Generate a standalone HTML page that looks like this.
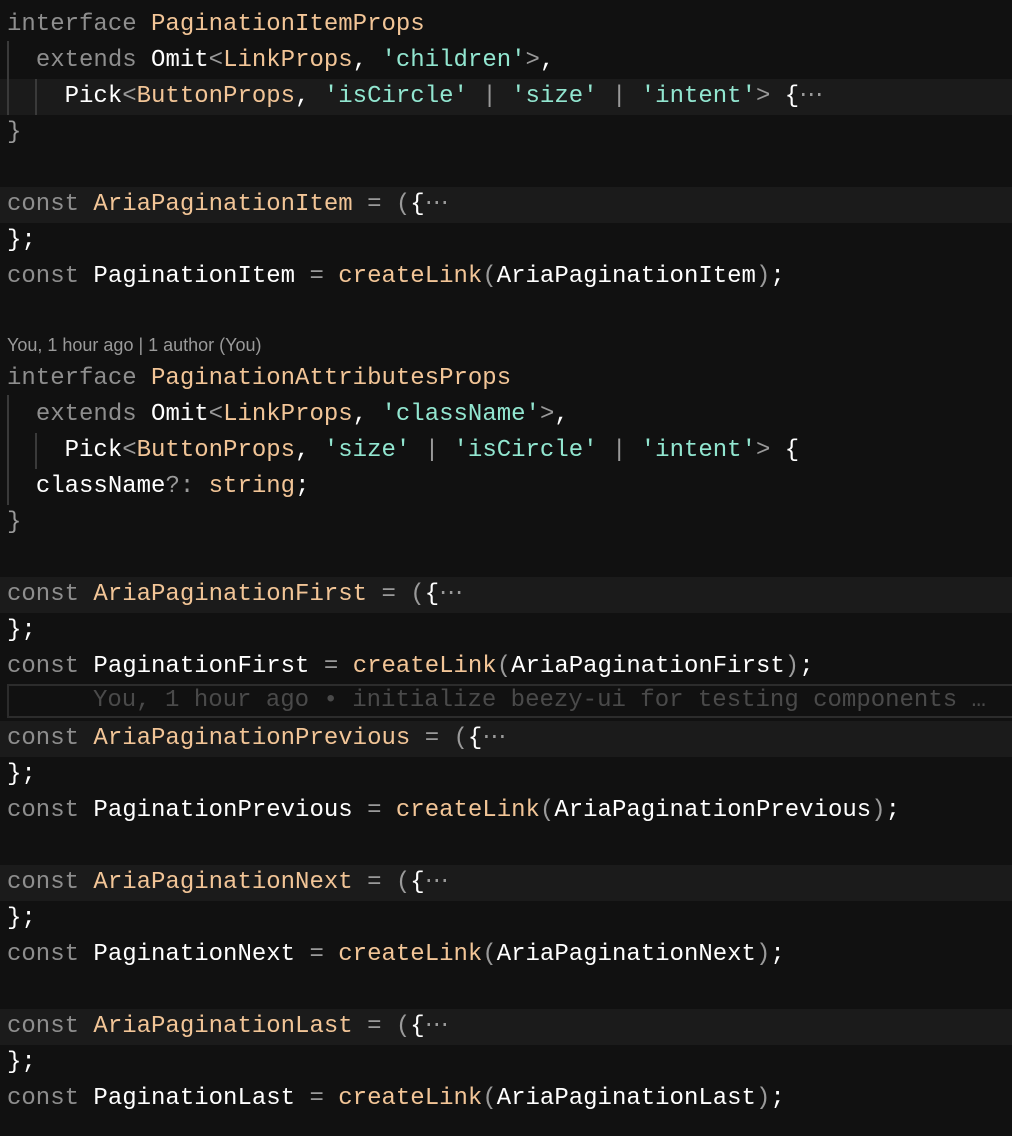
<!DOCTYPE html><html><head><style>
body{margin:0;background:#111111;width:1012px;height:1134px;overflow:hidden;font-family:"Liberation Mono",monospace;font-size:24px;color:#e8e8e8}
.wrap{position:absolute;left:0;top:2px;width:1012px;height:1134px}
.l{position:absolute;left:0;width:1012px;height:36px;line-height:36px;white-space:pre;padding-left:7px;box-sizing:border-box}
.h{background:#1b1b1b}
.k{color:#8e8e8e}.t{color:#f2c597}.s{color:#92e6d0}.w{color:#ffffff}.p{color:#9a9a9a}.f{color:#f2c597}
.g{position:absolute;width:2px;background:#3a3a3a}
.blame{position:absolute;left:7px;top:333px;font-family:"Liberation Sans",sans-serif;font-size:18px;color:#9a9a9a;white-space:pre}
.ib{position:absolute;left:7px;top:682px;width:1010px;height:34px;border:2px solid #2c2c2c;box-sizing:border-box;line-height:30px;white-space:pre;color:#4a4a4a;padding-left:84px}
</style></head><body><div class="wrap">
<div class="l" style="top:5px"><span class="k">interface</span> <span class="t">PaginationItemProps</span></div>
<div class="l" style="top:41px">  <span class="k">extends</span> <span class="w">Omit</span><span class="p">&lt;</span><span class="t">LinkProps</span><span class="w">,</span> <span class="s">'children'</span><span class="p">&gt;</span><span class="w">,</span></div>
<div class="l h" style="top:77px">    <span class="w">Pick</span><span class="p">&lt;</span><span class="t">ButtonProps</span><span class="w">,</span> <span class="s">'isCircle'</span> <span class="p">|</span> <span class="s">'size'</span> <span class="p">|</span> <span class="s">'intent'</span><span class="p">&gt;</span> <span class="w">{</span><span class="p">⋯</span></div>
<div class="l" style="top:113px"><span class="p">}</span></div>
<div class="l h" style="top:185px"><span class="k">const</span> <span class="t">AriaPaginationItem</span> <span class="p">=</span> <span class="p">(</span><span class="w">{</span><span class="p">⋯</span></div>
<div class="l" style="top:221px"><span class="w">};</span></div>
<div class="l" style="top:257px"><span class="k">const</span> <span class="w">PaginationItem</span> <span class="p">=</span> <span class="f">createLink</span><span class="p">(</span><span class="w">AriaPaginationItem</span><span class="p">)</span><span class="w">;</span></div>
<div class="blame">You, 1 hour ago | 1 author (You)</div>
<div class="l" style="top:359px"><span class="k">interface</span> <span class="t">PaginationAttributesProps</span></div>
<div class="l" style="top:395px">  <span class="k">extends</span> <span class="w">Omit</span><span class="p">&lt;</span><span class="t">LinkProps</span><span class="w">,</span> <span class="s">'className'</span><span class="p">&gt;</span><span class="w">,</span></div>
<div class="l" style="top:431px">    <span class="w">Pick</span><span class="p">&lt;</span><span class="t">ButtonProps</span><span class="w">,</span> <span class="s">'size'</span> <span class="p">|</span> <span class="s">'isCircle'</span> <span class="p">|</span> <span class="s">'intent'</span><span class="p">&gt;</span> <span class="w">{</span></div>
<div class="l" style="top:467px">  <span class="w">className</span><span class="p">?:</span> <span class="t">string</span><span class="w">;</span></div>
<div class="l" style="top:503px"><span class="p">}</span></div>
<div class="l h" style="top:575px"><span class="k">const</span> <span class="t">AriaPaginationFirst</span> <span class="p">=</span> <span class="p">(</span><span class="w">{</span><span class="p">⋯</span></div>
<div class="l" style="top:611px"><span class="w">};</span></div>
<div class="l" style="top:647px"><span class="k">const</span> <span class="w">PaginationFirst</span> <span class="p">=</span> <span class="f">createLink</span><span class="p">(</span><span class="w">AriaPaginationFirst</span><span class="p">)</span><span class="w">;</span></div>
<div class="ib">You, 1 hour ago • initialize beezy-ui for testing components …</div>
<div class="l h" style="top:719px"><span class="k">const</span> <span class="t">AriaPaginationPrevious</span> <span class="p">=</span> <span class="p">(</span><span class="w">{</span><span class="p">⋯</span></div>
<div class="l" style="top:755px"><span class="w">};</span></div>
<div class="l" style="top:791px"><span class="k">const</span> <span class="w">PaginationPrevious</span> <span class="p">=</span> <span class="f">createLink</span><span class="p">(</span><span class="w">AriaPaginationPrevious</span><span class="p">)</span><span class="w">;</span></div>
<div class="l h" style="top:863px"><span class="k">const</span> <span class="t">AriaPaginationNext</span> <span class="p">=</span> <span class="p">(</span><span class="w">{</span><span class="p">⋯</span></div>
<div class="l" style="top:899px"><span class="w">};</span></div>
<div class="l" style="top:935px"><span class="k">const</span> <span class="w">PaginationNext</span> <span class="p">=</span> <span class="f">createLink</span><span class="p">(</span><span class="w">AriaPaginationNext</span><span class="p">)</span><span class="w">;</span></div>
<div class="l h" style="top:1007px"><span class="k">const</span> <span class="t">AriaPaginationLast</span> <span class="p">=</span> <span class="p">(</span><span class="w">{</span><span class="p">⋯</span></div>
<div class="l" style="top:1043px"><span class="w">};</span></div>
<div class="l" style="top:1079px"><span class="k">const</span> <span class="w">PaginationLast</span> <span class="p">=</span> <span class="f">createLink</span><span class="p">(</span><span class="w">AriaPaginationLast</span><span class="p">)</span><span class="w">;</span></div>
<div class="g" style="left:7px;top:39px;height:74px"></div>
<div class="g" style="left:35px;top:77px;height:36px"></div>
<div class="g" style="left:7px;top:393px;height:110px"></div>
<div class="g" style="left:35px;top:431px;height:36px"></div>
</div></body></html>
